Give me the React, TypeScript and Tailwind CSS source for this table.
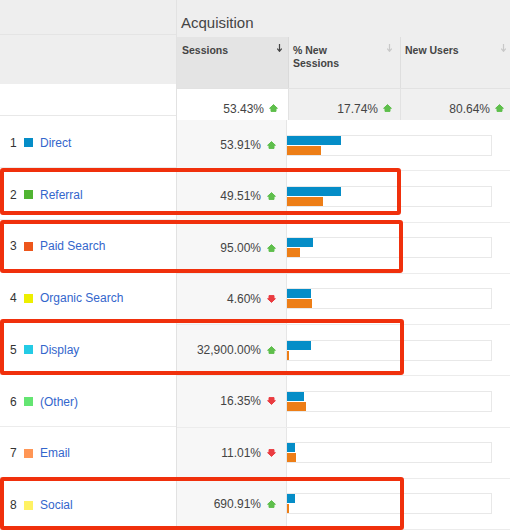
const rows = [
  { n: 1, label: "Direct", color: "#058dc7", value: "53.91%", up: true, blue: 54, orange: 34 },
  { n: 2, label: "Referral", color: "#50b432", value: "49.51%", up: true, blue: 54, orange: 36 },
  { n: 3, label: "Paid Search", color: "#ed561b", value: "95.00%", up: true, blue: 26, orange: 13 },
  { n: 4, label: "Organic Search", color: "#edef00", value: "4.60%", up: false, blue: 24, orange: 25 },
  { n: 5, label: "Display", color: "#24cbe5", value: "32,900.00%", up: true, blue: 24, orange: 2 },
  { n: 6, label: "(Other)", color: "#64e572", value: "16.35%", up: false, blue: 17, orange: 19 },
  { n: 7, label: "Email", color: "#ff9655", value: "11.01%", up: false, blue: 8, orange: 9 },
  { n: 8, label: "Social", color: "#fff263", value: "690.91%", up: true, blue: 8, orange: 2 },
];

function Trend({ up }: { up: boolean }) {
  return up ? (
    <svg width="9" height="8" viewBox="0 0 9 8" className="shrink-0">
      <polygon
        points="4.5,0.6 8.4,4.3 7,4.3 7,7.4 2,7.4 2,4.3 0.6,4.3"
        fill="#5fbf4c"
        stroke="#5fbf4c"
        strokeWidth="1"
        strokeLinejoin="round"
      />
    </svg>
  ) : (
    <svg width="9" height="8" viewBox="0 0 9 8" className="shrink-0">
      <polygon
        points="4.5,7.4 8.4,3.7 7,3.7 7,0.6 2,0.6 2,3.7 0.6,3.7"
        fill="#ea3c40"
        stroke="#ea3c40"
        strokeWidth="1"
        strokeLinejoin="round"
      />
    </svg>
  );
}

function SortArrow({ dark }: { dark?: boolean }) {
  return (
    <svg width="5" height="8" viewBox="0 0 5 8" className="shrink-0">
      <path d="M2.5 0 V7 M0.3 4.6 L2.5 7.3 L4.7 4.6" stroke={dark ? "#444" : "#c8c8c8"} strokeWidth="1.2" fill="none" />
    </svg>
  );
}

export default function App() {
  return (
    <div className="relative w-[510px] h-[530px] overflow-hidden bg-white font-['Liberation_Sans',Arial,sans-serif] text-[12px] text-[#444]">
      <div className="flex">
        {/* LEFT COLUMN */}
        <div className="w-[177px] shrink-0 border-r border-[#e2e2e2]">
          <div className="h-[35px] bg-[#eeeeee] border-b border-[#e4e4e4]" />
          <div className="h-[49px] bg-[#eeeeee]" />
          <div className="h-[32px] bg-white border-b border-[#e8e8e8]" />
          {rows.map((r) => (
            <div key={r.n} className="h-[51.75px] flex items-center pl-[10px] pt-[3px] border-b border-[#ececec] bg-white">
              <span className="w-[14px] text-[#333]">{r.n}</span>
              <span className="w-[9px] h-[9px] mr-[7px]" style={{ backgroundColor: r.color }} />
              <span className="text-[#3366cc]">{r.label}</span>
            </div>
          ))}
        </div>

        {/* RIGHT COLUMNS */}
        <div className="flex-1">
          <div className="h-[37px] bg-[#eeeeee] pl-[4px] pt-[14px] text-[15px] leading-[17px] text-[#444]">
            Acquisition
          </div>
          <div className="h-[51px] flex text-[10.5px] leading-[12.5px] font-bold text-[#444]">
            <div className="w-[112px] bg-[#e4e4e4] border-r border-[#dadada] flex justify-between pl-[5px] pr-[6px] pt-[7px]">
              <span>Sessions</span>
              <SortArrow dark />
            </div>
            <div className="w-[112px] bg-[#eeeeee] border-r border-[#dedede] flex justify-between pl-[4px] pr-[8px] pt-[7px]">
              <span>
                % New
                <br />
                Sessions
              </span>
              <SortArrow />
            </div>
            <div className="flex-1 bg-[#eeeeee] flex justify-between pl-[4px] pr-[4px] pt-[7px]">
              <span>New Users</span>
              <SortArrow />
            </div>
          </div>
          <div className="h-[32px] flex border-t border-[#e2e2e2]">
            <div className="w-[112px] bg-white border-r border-[#e2e2e2] flex items-start justify-end gap-[5px] pr-[10px] pt-[13px] leading-[14px]">
              <span>53.43%</span>
              <span className="pt-[2px]"><Trend up /></span>
            </div>
            <div className="w-[112px] bg-[#f0f0f0] border-r border-[#e2e2e2] flex items-start justify-end gap-[5px] pr-[8px] pt-[13px] leading-[14px]">
              <span>17.74%</span>
              <span className="pt-[2px]"><Trend up /></span>
            </div>
            <div className="flex-1 bg-[#f0f0f0] flex items-start justify-end gap-[5px] pr-[6px] pt-[13px] leading-[14px]">
              <span>80.64%</span>
              <span className="pt-[2px]"><Trend up /></span>
            </div>
          </div>
          {rows.map((r) => (
            <div key={r.n} className="h-[51.25px] flex border-b border-[#ececec]">
              <div className="w-[110px] bg-[#f7f7f7] border-r border-[#e6e6e6] flex items-center justify-end gap-[6px] pr-[10px]">
                <span>{r.value}</span>
                <Trend up={r.up} />
              </div>
              <div className="flex-1 flex items-center">
                <div className="w-[205px] h-[21px] bg-white border-y border-r border-[#e8e8e8] flex flex-col gap-[1px]">
                  <div className="h-[9px] bg-[#058dc7]" style={{ width: r.blue }} />
                  <div className="h-[9px] bg-[#ed7e17]" style={{ width: r.orange }} />
                </div>
              </div>
            </div>
          ))}
        </div>
      </div>

      {/* HIGHLIGHT BOXES */}
      <div className="absolute left-0 top-[168px] w-[401px] h-[47px] border-[4px] border-[#f0300c] rounded-[3px]" />
      <div className="absolute left-0 top-[220px] w-[403px] h-[53px] border-[4px] border-[#f0300c] rounded-[3px]" />
      <div className="absolute left-0 top-[319px] w-[404px] h-[56px] border-[4px] border-[#f0300c] rounded-[3px]" />
      <div className="absolute left-0 top-[477px] w-[404px] h-[53px] border-[4px] border-[#f0300c] rounded-[3px]" />
    </div>
  );
}
